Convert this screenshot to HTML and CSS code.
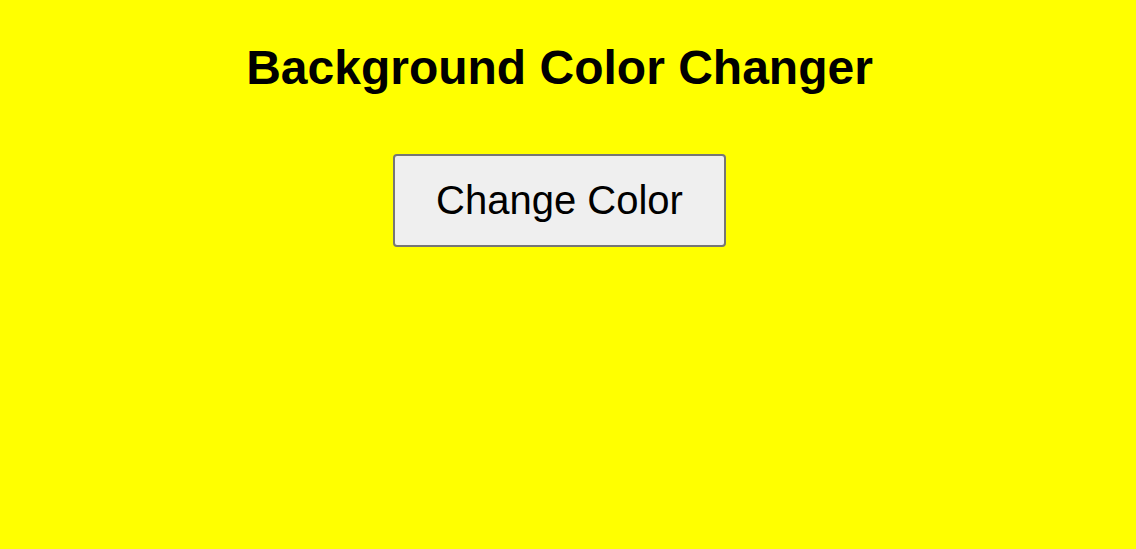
FILE: index.html
```html
<!DOCTYPE html>
<html>
<head>
<meta charset="utf-8">
<title>Background Color Changer</title>
<link rel="stylesheet" href="styles.css">
</head>
<body>
<main class="page">
  <h1 class="title">Background Color Changer</h1>
  <button class="change-btn" type="button">Change Color</button>
</main>
</body>
</html>
```

FILE: styles.css
```css
html, body {
  margin: 0;
  padding: 0;
  height: 100%;
}
body {
  background: #ffff00;
  font-family: "Liberation Sans", Arial, sans-serif;
  color: #000;
}
.page {
  display: flex;
  flex-direction: column;
  align-items: center;
  padding-top: 40px;
  padding-right: 17px;
}
.title {
  margin: 0 0 59px;
  font-size: 48px;
  font-weight: bold;
  line-height: 55px;
}
.change-btn {
  font-family: "Liberation Sans", Arial, sans-serif;
  font-size: 40px;
  line-height: 46px;
  padding: 21px 41px 22px;
  color: #000;
  background: #efefef;
  border: 2px solid #767676;
  border-radius: 4px;
}
```
